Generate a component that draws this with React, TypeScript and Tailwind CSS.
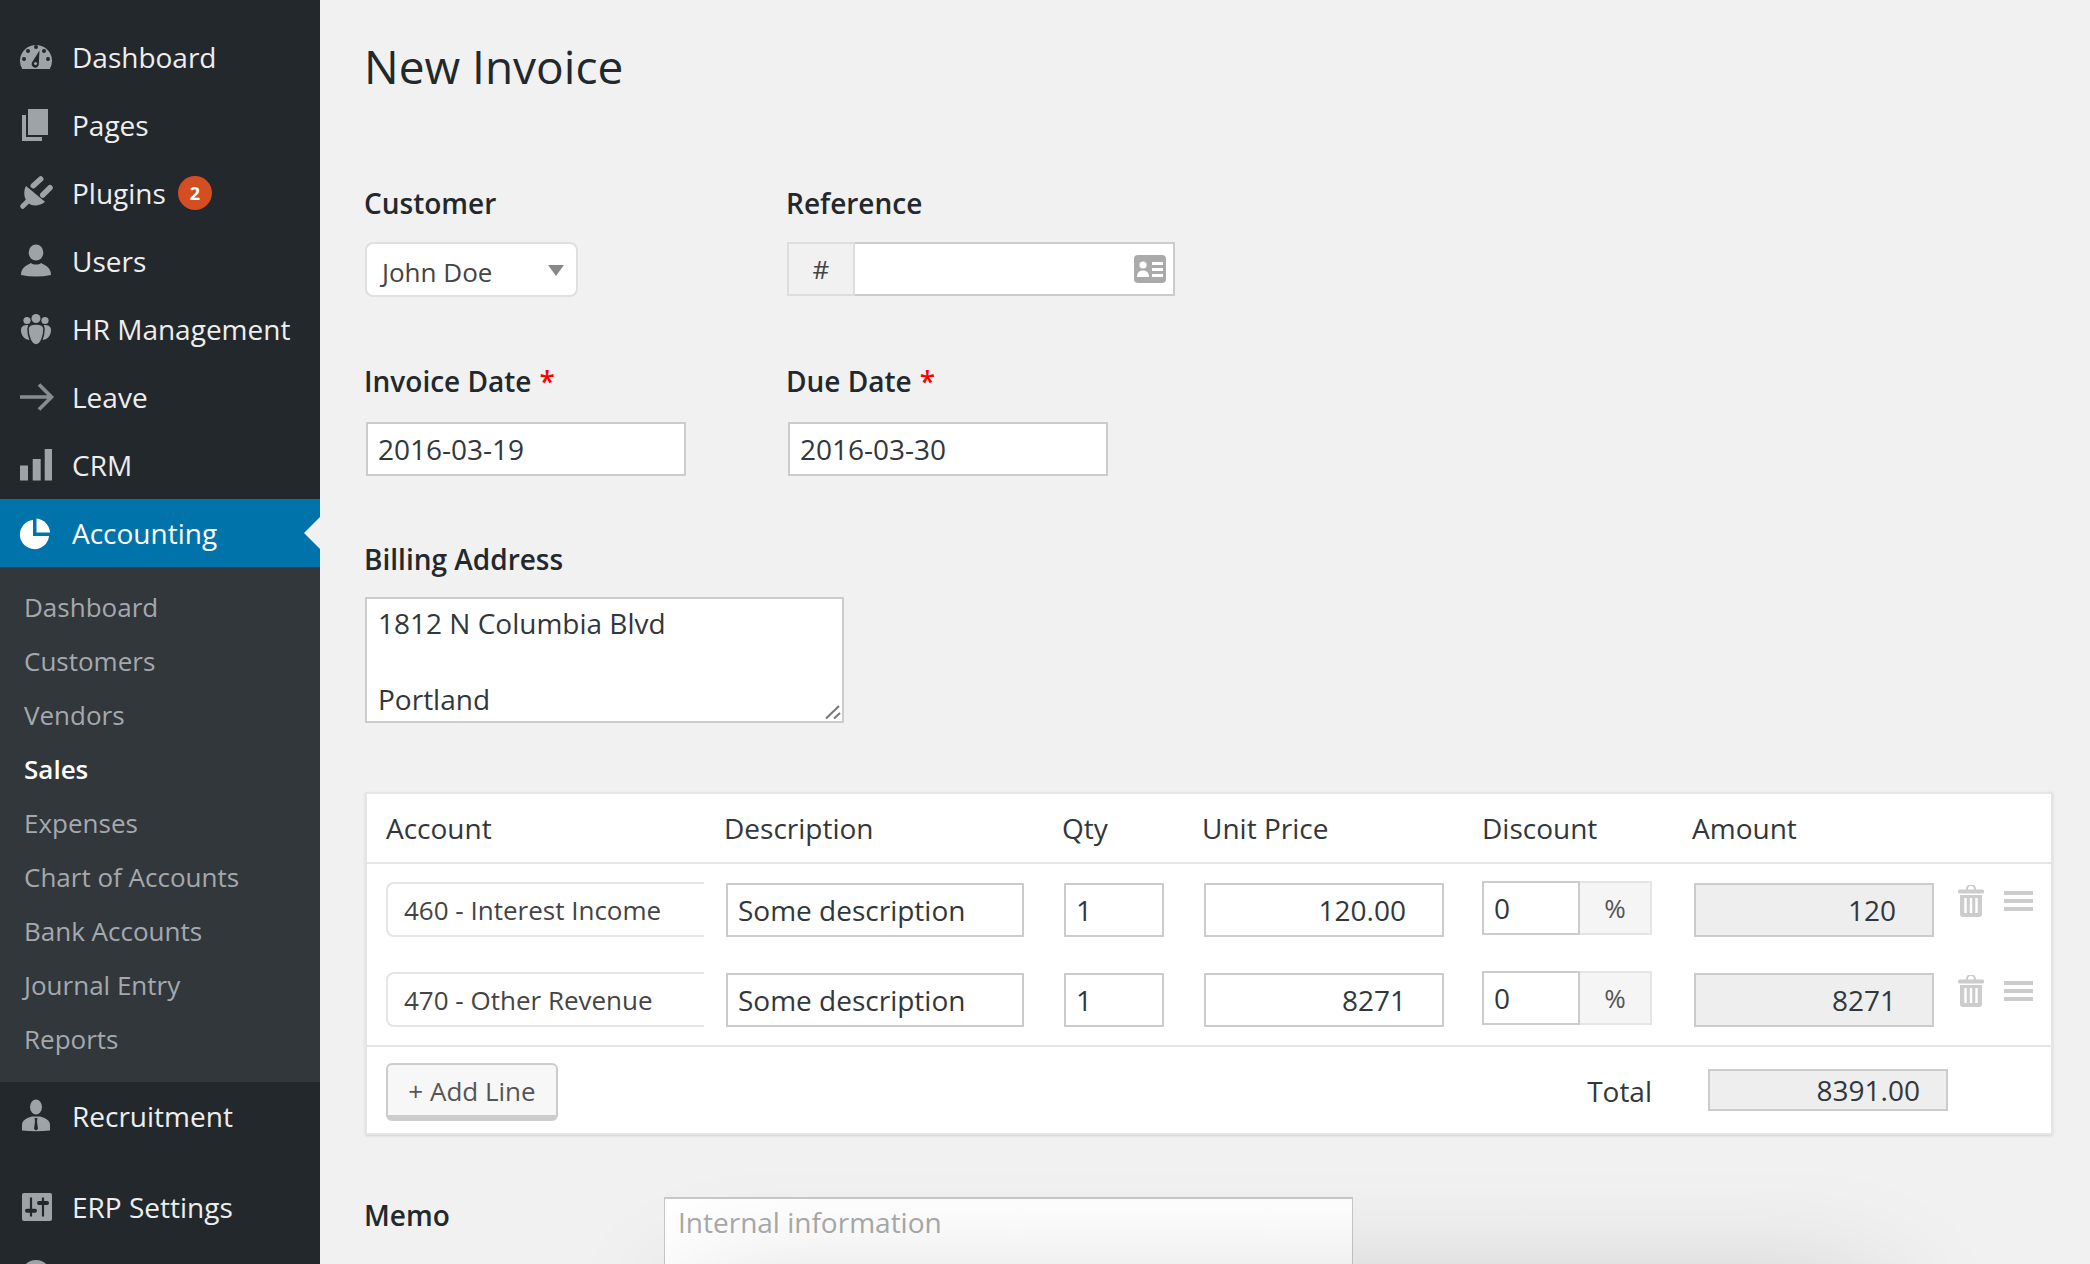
import type { ReactNode } from 'react';

const ICON = '#9ea3a8';
const DARK = '#23282d';

function Box({ children }: { children: ReactNode }) {
  return (
    <svg viewBox="0 0 40 40" className="w-10 h-10 shrink-0">
      {children}
    </svg>
  );
}

const icons: Record<string, ReactNode> = {
  dashboard: (
    <Box>
      <path d="M6.2 32A16 16 0 1 1 33.8 32Z" fill={ICON} />
      <g fill={DARK}>
        <circle cx="20" cy="10" r="2" />
        <circle cx="12" cy="14" r="2" />
        <circle cx="28" cy="14" r="2" />
        <circle cx="8" cy="22" r="2" />
        <circle cx="32" cy="22" r="2" />
      </g>
      <path d="M23.5 13.5 22.8 26.5A3.6 3.6 0 1 1 16.6 24.6Z" fill={DARK} />
      <circle cx="19.5" cy="26.5" r="1.6" fill={ICON} />
    </Box>
  ),
  pages: (
    <Box>
      <rect x="12" y="4" width="20" height="26" fill={ICON} />
      <path d="M6 10h4v22h16v4H6z" fill={ICON} />
    </Box>
  ),
  plugins: (
    <Box>
      <path d="M10 13 29 28.7C24 33 17 34 12 30 8 26 7 18 10 13Z" fill={ICON} />
      <path d="M17.3 12.7 24.7 6M26.7 22 34 14.7" stroke={ICON} strokeWidth="5.5" strokeLinecap="round" />
      <path d="M6.7 33.3 12.3 27.7" stroke={ICON} strokeWidth="5" strokeLinecap="round" />
    </Box>
  ),
  users: (
    <Box>
      <ellipse cx="20" cy="11.5" rx="7.3" ry="8" fill={ICON} />
      <path d="M5 34C5 27 10 24.5 15 22 17 24 23 24 25 22 30 24.5 35 27 35 34 25 36 15 36 5 34Z" fill={ICON} />
    </Box>
  ),
  hr: (
    <Box>
      <circle cx="20" cy="9.5" r="4.5" fill={ICON} />
      <circle cx="11" cy="11.5" r="3.6" fill={ICON} />
      <circle cx="29" cy="11.5" r="3.6" fill={ICON} />
      <path d="M5 21C5 17 8 16 12 16L14 31C9 31 5 27 5 21Z" fill={ICON} />
      <path d="M35 21C35 17 32 16 28 16L26 31C31 31 35 27 35 21Z" fill={ICON} />
      <path d="M12 20C12 16 16 15 20 15 24 15 28 16 28 20 28 27 25 36 20 36 15 36 12 27 12 20Z" fill={ICON} stroke={DARK} strokeWidth="1.5" />
    </Box>
  ),
  leave: (
    <Box>
      <path d="M4 20H35M23 7.5 35.5 20 23 32.5" fill="none" stroke="#878c91" strokeWidth="3.6" />
    </Box>
  ),
  crm: (
    <Box>
      <path d="M4 20.6h8v15H4zM16.7 14h8v21.6h-8zM28.7 4H36v31.6h-7.3z" fill={ICON} />
    </Box>
  ),
  accounting: (
    <Box>
      <path d="M17 7A14.6 14.6 0 1 0 33 23H17Z" fill="#fff" />
      <path d="M20.5 5.5A15 15 0 0 1 34 19.5H20.5Z" fill="#fff" />
    </Box>
  ),
  recruitment: (
    <Box>
      <ellipse cx="20" cy="11" rx="6" ry="7.5" fill={ICON} />
      <path d="M6 34.5V29C6 24 11 22 16 20.5H24C29 22 34 24 34 29V34.5C25 35.5 15 35.5 6 34.5Z" fill={ICON} />
      <path d="M18.6 22H21.4L21 25.5 22 33 20 34.6 18 33 19 25.5Z" fill={DARK} />
    </Box>
  ),
  settings: (
    <Box>
      <rect x="6" y="6" width="30" height="28" rx="2" fill={ICON} />
      <path d="M15 10.5V29.5M27 10.5V29.5" stroke={DARK} strokeWidth="2.2" />
      <path d="M11 23.7H19M23 16H31" stroke={DARK} strokeWidth="4" strokeLinecap="round" />
    </Box>
  ),
  help: (
    <Box>
      <circle cx="20" cy="20" r="15" fill={ICON} />
    </Box>
  ),
};

function MenuItem({ icon, label, badge }: { icon: string; label: string; badge?: string }) {
  return (
    <div className="h-[68px] flex items-center pl-4 text-[28px] text-[#eeeeee]">
      {icons[icon]}
      <span className="ml-4 -mt-px">{label}</span>
      {badge && (
        <span className="ml-3 w-[34px] h-[34px] rounded-full bg-[#d54e21] text-white text-[18px] font-bold flex items-center justify-center">
          {badge}
        </span>
      )}
    </div>
  );
}

const subItems = ['Dashboard', 'Customers', 'Vendors', 'Sales', 'Expenses', 'Chart of Accounts', 'Bank Accounts', 'Journal Entry', 'Reports'];

function Sidebar() {
  return (
    <aside className="w-[320px] shrink-0 bg-[#23282d] pt-[23px]">
      <MenuItem icon="dashboard" label="Dashboard" />
      <MenuItem icon="pages" label="Pages" />
      <MenuItem icon="plugins" label="Plugins" badge="2" />
      <MenuItem icon="users" label="Users" />
      <MenuItem icon="hr" label="HR Management" />
      <MenuItem icon="leave" label="Leave" />
      <MenuItem icon="crm" label="CRM" />
      <div className="relative h-[68px] flex items-center pl-4 text-[28px] text-white bg-[#0073aa]">
        {icons.accounting}
        <span className="ml-4 -mt-px">Accounting</span>
        <div className="absolute right-0 top-[18px] border-y-[16px] border-r-[16px] border-y-transparent border-r-[#f1f1f1]" />
      </div>
      <div className="bg-[#32373c] pt-[13px] pb-4">
        {subItems.map(item => (
          <div
            key={item}
            className={`h-[54px] flex items-center pl-6 text-[26px] ${item === 'Sales' ? 'font-semibold text-white' : 'text-[#a4a9ae]'}`}
          >
            {item}
          </div>
        ))}
      </div>
      <MenuItem icon="recruitment" label="Recruitment" />
      <div className="mt-[23px]">
        <MenuItem icon="settings" label="ERP Settings" />
      </div>
      <MenuItem icon="help" label="" />
    </aside>
  );
}

const field = 'h-[54px] bg-white border-2 border-[#cccccc] text-[28px] text-[#32373c] outline-none';

function Label({ children, required }: { children: ReactNode; required?: boolean }) {
  return (
    <div className="h-10 -ml-px flex items-center text-[28px] font-semibold text-[#23282d]">
      {children}
      {required && <span className="ml-2 text-[#ff0000]">*</span>}
    </div>
  );
}

function Trash() {
  return (
    <svg viewBox="0 0 26 32" className="w-[26px] h-8">
      <path d="M9 5V4a4 4 0 0 1 8 0v1" fill="none" stroke="#cccccc" strokeWidth="2" />
      <rect y="4.5" width="26" height="4" rx="1.5" fill="#cccccc" />
      <path d="M2 10h22v19a3 3 0 0 1-3 3H5a3 3 0 0 1-3-3z" fill="#cccccc" />
      <path d="M7.5 13v15M13 13v15M18.5 13v15" stroke="#ffffff" strokeWidth="2.4" />
    </svg>
  );
}

function Row({ account, price, amount }: { account: string; price: string; amount: string }) {
  return (
    <div className="grid grid-cols-[340px_338px_140px_278px_212px_264px_1fr] items-start pl-[19px] h-[54px]">
      <div className="-mt-px h-[55px] w-[318px] bg-white border-2 border-r-0 border-[#e5e5e5] rounded-l-lg flex items-center pl-4 pt-0.5 text-[26px] text-[#444444]">
        {account}
      </div>
      <input readOnly value="Some description" className={`${field} w-[298px] px-[10px]`} />
      <input readOnly value="1" className={`${field} w-[100px] px-[10px]`} />
      <input readOnly value={price} className={`${field} w-[240px] text-right pr-9`} />
      <div className="-mt-0.5 flex h-[54px] w-[170px]">
        <input readOnly value="0" className={`${field} w-[98px] px-[10px]`} />
        <div className="flex-1 bg-[#f5f5f5] border-2 border-l-0 border-[#e5e5e5] flex items-center justify-center text-[26px] text-[#555555]">%</div>
      </div>
      <input readOnly value={amount} className={`${field} w-[240px] text-right pr-9 !bg-[#eeeeee]`} />
      <div className="flex items-start pt-0.5">
        <Trash />
        <div className="ml-5 mt-1.5 w-[29px] flex flex-col gap-1">
          <div className="h-1 bg-[#cccccc]" />
          <div className="h-1 bg-[#cccccc]" />
          <div className="h-1 bg-[#cccccc]" />
        </div>
      </div>
    </div>
  );
}

function LinesCard() {
  return (
    <div className="mt-[69px] w-[1688px] bg-white border-2 border-[#e5e5e5] shadow-sm">
      <div className="h-[70px] border-b-2 border-[#e5e5e5] grid grid-cols-[340px_338px_140px_278px_212px_264px_1fr] items-center pl-[19px] text-[28px] text-[#32373c]">
        <span>Account</span>
        <span className="-ml-[2px]">Description</span>
        <span className="-ml-[2px]">Qty</span>
        <span className="-ml-[2px]">Unit Price</span>
        <span>Discount</span>
        <span className="-ml-0.5">Amount</span>
      </div>
      <div className="pt-[19px] pb-[18px] flex flex-col gap-9 border-b-2 border-[#e5e5e5]">
        <Row account="460 - Interest Income" price="120.00" amount="120" />
        <Row account="470 - Other Revenue" price="8271" amount="8271" />
      </div>
      <div className="h-[86px] flex items-start pl-[19px] pt-4">
        <button className="h-[58px] w-[172px] bg-[#f7f7f7] border-2 border-b-[6px] border-[#cccccc] rounded-[6px] pt-0.5 text-[26px] text-[#555555]">
          + Add Line
        </button>
        <span className="ml-auto mt-[7px] h-[42px] flex items-center text-[28px] text-[#32373c]">Total</span>
        <input
          readOnly
          value="8391.00"
          className="ml-[56px] mr-[103px] mt-[6px] h-[42px] w-[240px] bg-[#eeeeee] border-2 border-[#cccccc] text-[28px] text-[#32373c] text-right pr-[26px] outline-none"
        />
      </div>
    </div>
  );
}

export default function App() {
  return (
    <div className="relative flex h-[1264px] w-[2090px] overflow-hidden bg-[#f1f1f1] font-['Open_Sans',sans-serif]">
      <Sidebar />
      <main className="pl-[45px] pt-[36px] flex-1">
        <h1 className="h-[60px] -ml-px flex items-center text-[46px] text-[#23282d]">New Invoice</h1>

        <div className="mt-[87px] flex">
          <div className="w-[422px]">
            <Label>Customer</Label>
            <div className="mt-[19px] relative h-[55px] w-[213px] bg-white border-2 border-[#e0e0e0] rounded-lg flex items-center pl-[15px] pt-[5px] text-[26px] text-[#444444]">
              John Doe
              <div className="absolute right-[12px] top-[21px] border-x-[8px] border-t-[11px] border-x-transparent border-t-[#888888]" />
            </div>
          </div>
          <div>
            <Label>Reference</Label>
            <div className="mt-[19px] flex h-[54px] w-[388px]">
              <div className="w-[68px] bg-[#f1f1f1] border-2 border-[#dddddd] flex items-center justify-center text-[26px] text-[#444444]">#</div>
              <div className="relative flex-1">
                <input readOnly className="w-full h-full bg-white border-2 border-l-0 border-[#cccccc] outline-none" />
                <svg viewBox="0 0 32 28" className="absolute right-[9px] top-[13px] w-8 h-7">
                  <rect width="32" height="28" rx="4" fill="#aaaaaa" />
                  <circle cx="9" cy="10" r="3.6" fill="#fff" />
                  <path d="M3 22c0-5 3-6.5 6-6.5s6 1.5 6 6.5z" fill="#fff" />
                  <path d="M18 7h11v3H18zM18 13h11v3H18zM18 19h11v3H18z" fill="#fff" />
                </svg>
              </div>
            </div>
          </div>
        </div>

        <div className="mt-[64px] flex">
          <div className="w-[422px]">
            <Label required>Invoice Date</Label>
            <input readOnly value="2016-03-19" className={`${field} mt-[21px] ml-px w-[320px] px-[10px]`} />
          </div>
          <div>
            <Label required>Due Date</Label>
            <input readOnly value="2016-03-30" className={`${field} mt-[21px] ml-px w-[320px] px-[10px]`} />
          </div>
        </div>

        <div className="mt-[63px]">
          <Label>Billing Address</Label>
          <div className="relative mt-[18px] w-[479px]">
            <textarea
              readOnly
              value={'1812 N Columbia Blvd\n\nPortland'}
              className="block h-[126px] w-full resize-none bg-white border-2 border-[#cccccc] text-[28px] leading-[38px] text-[#32373c] px-[11px] py-[5px] outline-none"
            />
            <svg viewBox="0 0 16 16" className="absolute right-[3px] bottom-[3px] w-4 h-4">
              <path d="M1 14.5 14 2M9 14.5 15 9" stroke="#777777" strokeWidth="2" />
            </svg>
          </div>
        </div>

        <LinesCard />

        <div className="mt-[62px] flex items-start">
          <div className="w-[299px] -mt-0.5">
            <Label>Memo</Label>
          </div>
          <textarea
            readOnly
            placeholder="Internal information"
            className="block h-[120px] w-[689px] resize-none bg-white border border-t-2 border-[#c8c8c8] text-[28px] placeholder:text-[#aaaaaa] px-[13px] py-[2px] outline-none"
          />
        </div>
      </main>
      {/* shadow of something just below the fold */}
      <div className="absolute left-[690px] top-[1300px] h-[200px] w-[1188px] shadow-[0_0_130px_rgba(0,0,0,0.22)] pointer-events-none" />
    </div>
  );
}
